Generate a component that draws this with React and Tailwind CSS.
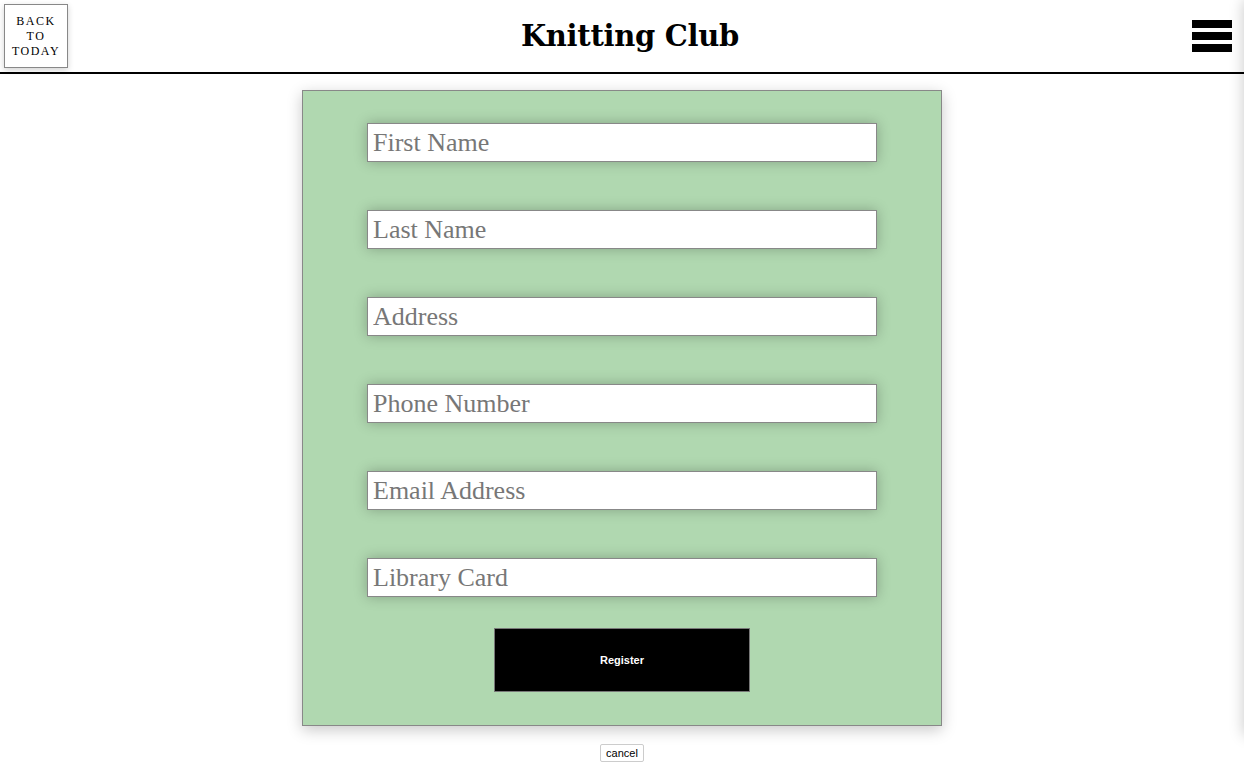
import React from 'react';

const fields = ['First Name', 'Last Name', 'Address', 'Phone Number', 'Email Address', 'Library Card'];

export default function App() {
  return (
    <div className="min-h-[763px] bg-white font-['Liberation_Serif',serif] text-black overflow-hidden">
      {/* Header */}
      <header className="flex items-start justify-between h-[74px] border-b-2 border-black">
        <button className="ml-[4px] mt-[4px] w-[64px] h-[64px] border border-[#888] bg-white shadow-[0_2px_6px_rgba(0,0,0,0.18)] flex flex-col items-center justify-center text-[12px] leading-[15px] tracking-[1.5px] font-['Liberation_Serif',serif]">
          <span>BACK</span>
          <span>TO</span>
          <span>TODAY</span>
        </button>
        <h1 className="mt-[16px] text-[29px] leading-[40px] font-bold font-['DejaVu_Serif',serif] tracking-[-0.3px]">Knitting Club</h1>
        <div className="mr-[12px] mt-[20px] flex flex-col gap-[4px] w-[40px]">
          <span className="block h-[8px] bg-black"></span>
          <span className="block h-[8px] bg-black"></span>
          <span className="block h-[8px] bg-black"></span>
        </div>
      </header>

      {/* Form */}
      <form className="mx-auto mt-[16px] w-[640px] bg-[#b0d8b0] border border-[#888] shadow-[0_4px_14px_rgba(0,0,0,0.22)] px-[64px] pt-[32px] pb-[33px] flex flex-col items-center">
        {fields.map((f, i) => (
          <input
            key={f}
            placeholder={f}
            className={`w-[510px] h-[39px] bg-white border border-[#888] px-[5px] text-[26px] font-['Liberation_Serif',serif] placeholder:text-[#777] outline-none shadow-[0_0_12px_rgba(0,0,0,0.25)] ${i > 0 ? 'mt-[48px]' : ''}`}
          />
        ))}
        <button
          type="button"
          className="mt-[31px] w-[256px] h-[64px] bg-black border border-[#777] text-white text-[11px] font-bold font-['Liberation_Sans',sans-serif]"
        >
          Register
        </button>
      </form>

      <div className="flex justify-center mt-[18px]">
        <button className="h-[18px] px-[5px] bg-white border border-[#ccc] rounded-[2px] text-[11px] leading-none font-['Liberation_Sans',sans-serif]">
          cancel
        </button>
      </div>

      {/* Off-canvas side menu shadow */}
      <div className="fixed top-0 left-full w-[240px] h-[735px] bg-white shadow-[0_0_14px_rgba(0,0,0,0.22)]"></div>
    </div>
  );
}
